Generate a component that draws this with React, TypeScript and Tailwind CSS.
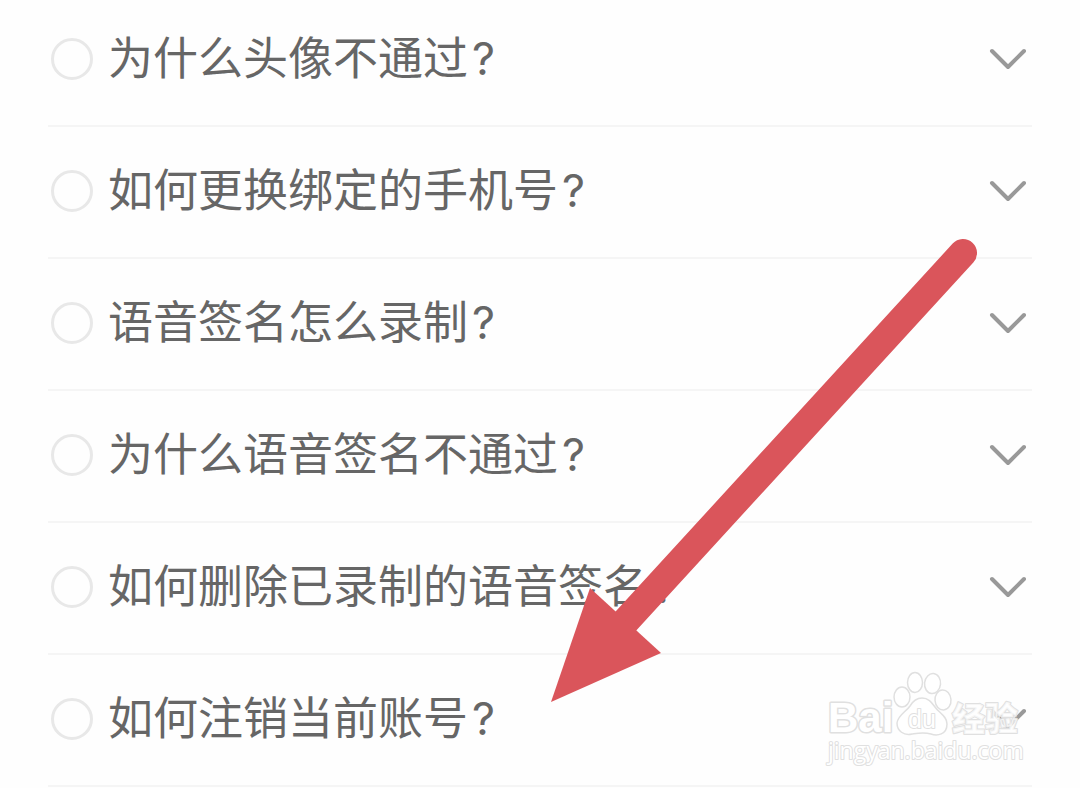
import { useState } from "react";

const questions = [
  "为什么头像不通过",
  "如何更换绑定的手机号",
  "语音签名怎么录制",
  "为什么语音签名不通过",
  "如何删除已录制的语音签名",
  "如何注销当前账号",
];

function Chevron() {
  return (
    <svg viewBox="0 0 38 24" className="w-[38px] h-6" fill="none" stroke="#999999" strokeWidth="4" strokeLinecap="round" strokeLinejoin="round">
      <path d="M3 4 19 20 35 4" />
    </svg>
  );
}

function QuestionRow({ text, checked, onSelect }: { text: string; checked: boolean; onSelect: () => void }) {
  return (
    <li className="flex items-center h-[132px] border-b-2 border-[#f5f5f5] pl-[3px] pr-[5px] pb-0.5">
      <label className="flex flex-1 items-center gap-[15px]">
        <input
          type="radio"
          name="question"
          checked={checked}
          onChange={onSelect}
          className="appearance-none size-[42px] shrink-0 rounded-full border-[3px] border-[#e8e8e8] checked:border-[#999999]"
        />
        <span className="text-[45px] leading-[60px] pb-1 text-[#666666]">
          {text}
          <span className="pl-1 font-['Inter',sans-serif]">?</span>
        </span>
      </label>
      <button type="button" aria-label={text} onClick={onSelect}>
        <Chevron />
      </button>
    </li>
  );
}

function Arrow() {
  return (
    <svg viewBox="0 0 430 468" className="absolute left-[549px] top-[237px] w-[430px] h-[468px] pointer-events-none" fill="#da555b" aria-hidden="true">
      <path d="M414 16 76 385" stroke="#da555b" strokeWidth="28" strokeLinecap="round" />
      <path d="M2 465 41 351 112 416Z" />
    </svg>
  );
}

function Watermark() {
  return (
    <svg
      viewBox="0 0 210 100"
      className="absolute left-[820px] top-[668px] w-[210px] h-[100px] pointer-events-none"
      fill="#ffffff"
      stroke="#e0e0e0"
      strokeWidth="3"
      strokeLinejoin="round"
      aria-label="Baidu 经验"
    >
      <g className="[paint-order:stroke]">
        <text x="8" y="64" className="text-[42px] font-bold font-['Liberation_Sans']">Bai</text>
        <text x="132" y="63" fillOpacity="0.7" strokeWidth="2" className="text-[33px] font-black font-['Noto_Sans_CJK_SC']">经验</text>
        <text x="8" y="91" strokeWidth="2" className="text-[23px] font-['Open_Sans']">jingyan.baidu.com</text>
      </g>
      <g strokeWidth="1.5">
        <ellipse cx="82" cy="29" rx="8" ry="10" />
        <ellipse cx="95" cy="14.5" rx="7.5" ry="10" />
        <ellipse cx="112.5" cy="15.5" rx="8" ry="10" transform="rotate(6 112 16)" />
        <ellipse cx="123" cy="32" rx="8" ry="10" transform="rotate(-4 123 32)" />
        <path d="M102 30C109 30 112 35 115 39C119 45 127 48 127 56C127 67 117 68 111 66C104 64 99 65 92 66C84 68 77 63 77 55C78 47 86 44 90 38C93 33 96 30 102 30Z" />
      </g>
      <text x="88" y="60" strokeWidth="2" className="text-[25px] font-['Liberation_Sans'] [paint-order:stroke]">du</text>
    </svg>
  );
}

export default function App() {
  const [selected, setSelected] = useState<number | null>(null);

  return (
    <main className="relative overflow-hidden bg-[#fefefe] min-h-screen px-12 font-['Noto_Sans_CJK_SC',sans-serif]">
      <ul className="-mt-[5px]">
        {questions.map((q, i) => (
          <QuestionRow key={q} text={q} checked={selected === i} onSelect={() => setSelected(i)} />
        ))}
      </ul>
      <Arrow />
      <Watermark />
    </main>
  );
}
